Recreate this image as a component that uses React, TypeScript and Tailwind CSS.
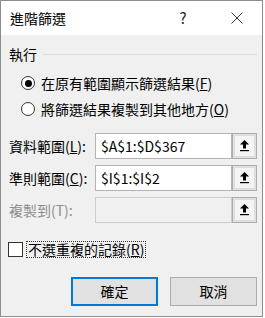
import React from 'react';

const FONT = { fontFamily: '"Noto Sans CJK TC", "Noto Sans", sans-serif' };

const PickIcon = () => (
  <svg width="9" height="12" viewBox="0 0 9 12">
    <polygon points="4.5,0 9,4.5 0,4.5" fill="#000" />
    <rect x="3" y="4" width="3" height="4.5" fill="#000" />
    <rect x="0" y="10" width="9" height="1.2" fill="#000" />
  </svg>
);

const Radio = ({ checked, children }: { checked?: boolean; children: React.ReactNode }) => (
  <div className="flex items-center h-[20px] pl-[20px]">
    <span className="w-[14px] h-[14px] rounded-full border border-[#333] bg-white flex items-center justify-center">
      {checked && <span className="w-[7px] h-[7px] rounded-full bg-[#000]" />}
    </span>
    <span className="ml-[6px] text-[14px] leading-[20px] text-black">{children}</span>
  </div>
);

const RangeRow = ({
  label,
  value,
  disabled,
}: {
  label: React.ReactNode;
  value?: string;
  disabled?: boolean;
}) => (
  <div className="flex items-center h-[26px]">
    <div className={`w-[94px] pl-[8px] text-[14px] leading-[20px] ${disabled ? 'text-[#8d8d8d]' : 'text-black'}`}>
      {label}
    </div>
    <div
      className={`w-[137px] h-[26px] border flex items-center pl-[5px] text-[14px] ${
        disabled ? 'bg-[#f0f0f0] border-[#cccccc]' : 'bg-white border-[#b4b4b4] text-black'
      }`}
    >
      {value}
    </div>
    <div className="w-[25px] h-[26px] border border-[#adadad] bg-[#e1e1e1] flex items-center justify-center">
      <div className="w-[21px] h-[22px] bg-[#f4f4f4] border border-[#dcdcdc] flex items-center justify-center">
        <PickIcon />
      </div>
    </div>
  </div>
);

export default function App() {
  return (
    <div className="w-[265px] h-[318px] bg-white" style={FONT}>
      <div className="w-[263px] h-[317px] border border-[#8c8c8c] bg-[#f0f0f0] flex flex-col">
        <div className="h-[34px] bg-white flex items-center">
          <span className="pl-[9px] text-[14px] text-black">進階篩選</span>
          <span className="ml-auto w-[20px] text-center text-[15px] text-[#222] mr-[38px]">?</span>
          <svg className="mr-[19px]" width="12" height="12" viewBox="0 0 12 12">
            <path d="M0.5 0.5 L11.5 11.5 M11.5 0.5 L0.5 11.5" stroke="#333" strokeWidth="1" />
          </svg>
        </div>

        <div className="mt-[9px] flex items-center h-[20px] pl-[8px] pr-[5px]">
          <span className="text-[14px] text-black">執行</span>
          <div className="flex-1 ml-[6px] h-px bg-[#dcdcdc]" />
        </div>

        <div className="mt-[9px]">
          <Radio checked>
            在原有範圍顯示篩選結果(<span className="underline">F</span>)
          </Radio>
        </div>
        <div className="mt-[6px]">
          <Radio>
            將篩選結果複製到其他地方(<span className="underline">O</span>)
          </Radio>
        </div>

        <div className="mt-[14px] flex flex-col gap-[6px]">
          <RangeRow label={<>資料範圍(<span className="underline">L</span>):</>} value="$A$1:$D$367" />
          <RangeRow label={<>準則範圍(<span className="underline">C</span>):</>} value="$I$1:$I$2" />
          <RangeRow label="複製到(T):" disabled />
        </div>

        <div className="mt-[18px] flex items-center pl-[7px] h-[17px]">
          <span className="w-[15px] h-[15px] border border-[#333] bg-white" />
          <span className="ml-[3px] border border-dotted border-[#333] px-[1px] h-[17px] flex items-center text-[14px] text-black">
            不選重複的記錄(<span className="underline">R</span>)
          </span>
        </div>

        <div className="mt-[19px] flex pl-[70px] gap-[12px]">
          <button className="w-[87px] h-[29px] border-2 border-[#0078d7] bg-[#e1e1e1] text-[14px] text-black">
            確定
          </button>
          <button className="w-[87px] h-[29px] border border-[#adadad] bg-[#e1e1e1] text-[14px] text-black">
            取消
          </button>
        </div>
      </div>
    </div>
  );
}
